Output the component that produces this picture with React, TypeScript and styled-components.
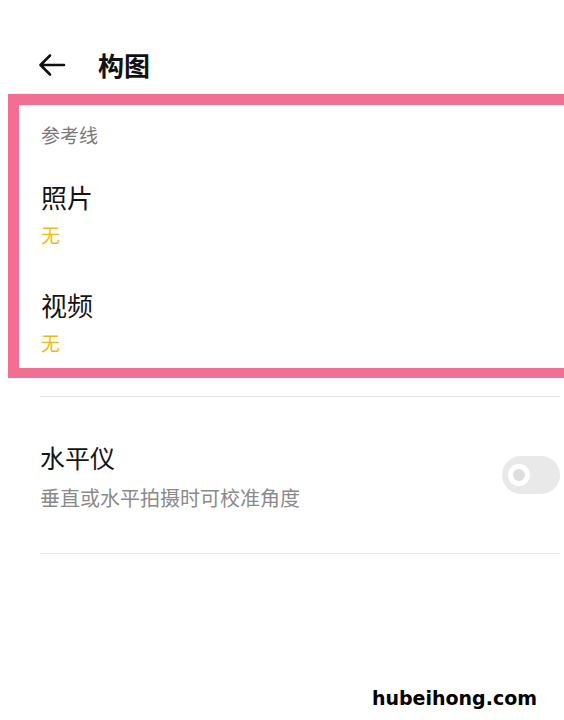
import { useState } from "react";
import styled, { createGlobalStyle } from "styled-components";

const GlobalStyle = createGlobalStyle`
  html, body {
    margin: 0;
    padding: 0;
    background: #fff;
    overflow: hidden;
  }
  body {
    font-family: "Noto Sans CJK SC", "Noto Sans", sans-serif;
  }
`;

const Page = styled.div`
  width: 564px;
  height: 720px;
  display: flex;
  flex-direction: column;
  background: #fff;
`;

const Header = styled.div`
  height: 94px;
  box-sizing: border-box;
  display: flex;
  align-items: center;
  padding: 48px 0 12px 37px;
`;

const BackButton = styled.button`
  border: none;
  background: none;
  padding: 0;
  width: 30px;
  height: 30px;
  display: flex;
  align-items: center;
  justify-content: center;
  margin-right: 31px;
`;

const Title = styled.div`
  font-size: 26px;
  font-weight: 700;
  color: #111;
  line-height: 34px;
`;

// pink highlight frame (annotation) that runs off the right edge
const Frame = styled.section`
  margin-left: 8px;
  border: 11px solid #f26e93;
  border-right: none;
  border-bottom-width: 10px;
  padding: 15px 0 2px 22px;
`;

const Category = styled.div`
  font-size: 19px;
  line-height: 30px;
  color: #7a7a7a;
`;

const Item = styled.div`
  display: flex;
  flex-direction: column;
  gap: 8px;
  padding: 30px 0 10px;
`;

const ItemTitle = styled.div<{ $size?: number }>`
  font-size: ${(p) => p.$size ?? 26}px;
  line-height: 34px;
  color: #141414;
`;

const ItemValue = styled.div`
  font-size: 19px;
  line-height: 26px;
  color: #ecbc12;
`;

const List = styled.div`
  margin: 0 4px 0 40px;
`;

const Divider = styled.div<{ $top: number }>`
  height: 1px;
  background: #e6e6e6;
  margin-top: ${(p) => p.$top}px;
`;

const Row = styled.div`
  display: flex;
  align-items: center;
  justify-content: space-between;
  padding: 43px 0 40px;
`;

const RowText = styled.div`
  display: flex;
  flex-direction: column;
  gap: 9px;
`;

const RowSub = styled.div`
  font-size: 20px;
  line-height: 30px;
  color: #8a8a8a;
`;

const Toggle = styled.button<{ $on: boolean }>`
  width: 58px;
  height: 38px;
  border: none;
  border-radius: 19px;
  background: ${(p) => (p.$on ? "#ecbc12" : "#e9e9e9")};
  padding: 0 0 0 6px;
  display: flex;
  align-items: center;
  justify-content: ${(p) => (p.$on ? "flex-end" : "flex-start")};
  margin-top: -4px;
  cursor: pointer;
`;

const Knob = styled.span`
  width: 22px;
  height: 22px;
  box-sizing: border-box;
  border-radius: 50%;
  border: 5px solid #fff;
  background: #dedede;
`;

const Watermark = styled.div`
  margin-top: auto;
  align-self: flex-end;
  margin-right: 27px;
  margin-bottom: 10px;
  font-family: "DejaVu Sans", sans-serif;
  font-weight: 700;
  font-size: 19px;
  line-height: 24px;
  color: #000;
`;

export default function App() {
  const [level, setLevel] = useState(false);

  return (
    <Page>
      <GlobalStyle />
      <Header>
        <BackButton aria-label="back">
          <svg width="30" height="30" viewBox="0 0 30 30" fill="none">
            <path
              d="M27 15H4M13 5.5L3.5 15L13 24.5"
              stroke="#111"
              strokeWidth="2.6"
              strokeLinecap="round"
              strokeLinejoin="round"
            />
          </svg>
        </BackButton>
        <Title>构图</Title>
      </Header>

      <Frame>
        <Category>参考线</Category>
        <Item>
          <ItemTitle>照片</ItemTitle>
          <ItemValue>无</ItemValue>
        </Item>
        <Item>
          <ItemTitle>视频</ItemTitle>
          <ItemValue>无</ItemValue>
        </Item>
      </Frame>

      <List>
        <Divider $top={18} />
        <Row>
          <RowText>
            <ItemTitle $size={25}>水平仪</ItemTitle>
            <RowSub>垂直或水平拍摄时可校准角度</RowSub>
          </RowText>
          <Toggle $on={level} onClick={() => setLevel(!level)}>
            <Knob />
          </Toggle>
        </Row>
        <Divider $top={0} />
      </List>

      <Watermark>hubeihong.com</Watermark>
    </Page>
  );
}
